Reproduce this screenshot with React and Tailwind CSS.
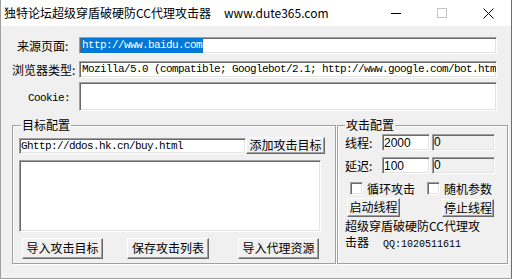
const cjk = "font-['Noto_Sans_CJK_SC','Liberation_Sans',sans-serif]";
const mono = "font-['Liberation_Mono','Noto_Sans_CJK_SC',monospace] text-[11px] tracking-[-0.6px]";
const sunken =
  "border border-t-[#a0a0a0] border-l-[#a0a0a0] border-b-white border-r-white shadow-[inset_1px_1px_0_#696969,inset_-1px_-1px_0_#e3e3e3]";
const raised =
  "border border-t-white border-l-white border-b-[#696969] border-r-[#696969] shadow-[inset_-1px_-1px_0_#a0a0a0] bg-[#f0f0f0] flex items-center justify-center leading-none pb-[1px]";
const etched = "relative border border-[#a0a0a0] shadow-[1px_1px_0_#fff,inset_1px_1px_0_#fff]";

function TitleBar() {
  return (
    <div className="h-[26px] bg-white flex items-center shrink-0">
      <span className="pl-[3px] text-[12px] leading-none whitespace-pre">
        独特论坛超级穿盾破硬防CC代理攻击器<span className="ml-[13px]">www.dute365.com</span>
      </span>
      <div className="ml-auto flex h-full">
        <div className="w-[46px] h-full flex items-center justify-center">
          <svg width="10" height="10" viewBox="0 0 10 10">
            <line x1="0" y1="5.5" x2="10" y2="5.5" stroke="#000" strokeWidth="1" />
          </svg>
        </div>
        <div className="w-[46px] h-full flex items-center justify-center">
          <svg width="10" height="10" viewBox="0 0 10 10">
            <rect x="0.5" y="0.5" width="9" height="9" fill="none" stroke="#c4c4c4" strokeWidth="1" />
          </svg>
        </div>
        <div className="w-[46px] h-full flex items-center justify-center">
          <svg width="11" height="11" viewBox="0 0 11 11">
            <path d="M0.5 0.5 L10.5 10.5 M10.5 0.5 L0.5 10.5" stroke="#000" strokeWidth="1" />
          </svg>
        </div>
      </div>
    </div>
  );
}

function Field({ label, pad, height, children, gap }) {
  return (
    <div className={`flex items-center ${gap}`} style={{ height }}>
      <div className={`w-[78px] ${pad} whitespace-pre leading-none`}>{label}</div>
      <div className={`${sunken} w-[418px] h-full bg-white flex items-center pl-[1px] overflow-hidden whitespace-pre`}>
        {children}
      </div>
    </div>
  );
}

function Checkbox({ label }) {
  return (
    <div className="flex items-center">
      <div className={`${sunken} w-[13px] h-[13px] bg-white`} />
      <span className="ml-[4px] leading-none">{label}</span>
    </div>
  );
}

export default function App() {
  return (
    <div
      className={`w-[512px] h-[279px] bg-[#f0f0f0] border-x border-b border-l-[#a0a0a0] border-r-[#6e6e6e] border-b-[#a0a0a0] flex flex-col overflow-hidden text-[12px] text-black ${cjk}`}
    >
      <TitleBar />
      <div className="flex flex-col pt-[11px]">
        <Field label="来源页面:" pad="pl-[16px]" height={17} gap="">
          <span className={`${mono} bg-[#0078d7] text-white px-[1px] leading-[15px]`}>http://www.baidu.com</span>
        </Field>
        <Field label="浏览器类型:" pad="pl-[11px]" height={17} gap="mt-[7px]">
          <span className={`${mono} pl-[1px] leading-[15px]`}>
            Mozilla/5.0 (compatible; Googlebot/2.1; http://www.google.com/bot.htm
          </span>
        </Field>
        <Field label={<span className={mono}>Cookie:</span>} pad="pl-[27px]" height={29} gap="mt-[4px]">
          {null}
        </Field>

        <div className="flex mt-[14px] pl-[11px] gap-[1px]">
          {/* 目标配置 */}
          <div className={`${etched} w-[324px] h-[139px]`}>
            <span className="absolute left-[8px] top-[-8px] bg-[#f0f0f0] px-[1px] leading-[14px]">目标配置</span>
            <div className="flex mt-[11px] pl-[6px]">
              <div className={`${sunken} w-[227px] h-[16px] mt-[1px] bg-white flex items-center pl-[1px] overflow-hidden whitespace-pre`}>
                <span className={`${mono} leading-[14px]`}>Ghttp://ddos.hk.cn/buy.html</span>
              </div>
              <div className={`${raised} w-[79px] h-[17px]`}>添加攻击目标</div>
            </div>
            <div className={`${sunken} ml-[6px] mt-[6px] w-[302px] h-[72px] bg-white`} />
            <div className="flex mt-[6px] pl-[9px]">
              <div className={`${raised} w-[81px] h-[21px]`}>导入攻击目标</div>
              <div className={`${raised} ml-[24px] w-[82px] h-[21px]`}>保存攻击列表</div>
              <div className={`${raised} ml-[29px] w-[81px] h-[21px]`}>导入代理资源</div>
            </div>
          </div>

          {/* 攻击配置 */}
          <div className={`${etched} w-[171px] h-[139px]`}>
            <span className="absolute left-[7px] top-[-8px] bg-[#f0f0f0] px-[1px] leading-[14px]">攻击配置</span>
            <div className="flex items-center mt-[8px] pl-[7px] h-[17px]">
              <div className="w-[37px] leading-none">线程:</div>
              <div className={`${sunken} w-[48px] h-full bg-white flex items-center pl-[1px] font-['Liberation_Sans',sans-serif] leading-none`}>2000</div>
              <div className={`${sunken} ml-[2px] w-[63px] h-full bg-[#f0f0f0] pl-[1px] pt-[1px] font-['Liberation_Sans',sans-serif] leading-[12px]`}>0</div>
            </div>
            <div className="flex items-center mt-[6px] pl-[7px] h-[17px]">
              <div className="w-[37px] leading-none">延迟:</div>
              <div className={`${sunken} w-[48px] h-full bg-white flex items-center pl-[1px] font-['Liberation_Sans',sans-serif] leading-none`}>100</div>
              <div className={`${sunken} ml-[2px] w-[63px] h-full bg-[#f0f0f0] pl-[1px] pt-[1px] font-['Liberation_Sans',sans-serif] leading-[12px]`}>0</div>
            </div>
            <div className="flex mt-[8px] pl-[12px] h-[13px]">
              <div className="w-[77px]">
                <Checkbox label="循环攻击" />
              </div>
              <Checkbox label="随机参数" />
            </div>
            <div className="flex mt-[3px] pl-[9px]">
              <div className={`${raised} w-[53px] h-[19px]`}>启动线程</div>
              <div className={`${raised} ml-[42px] mt-[1px] w-[52px] h-[18px]`}>停止线程</div>
            </div>
            <div className="pl-[7px] leading-[17px] whitespace-pre">
              <div>超级穿盾破硬防CC代理攻</div>
              <div className="-mt-[1px]">
                击器<span className="ml-[14px] font-['Liberation_Mono',monospace] text-[10px]">QQ:1020511611</span>
              </div>
            </div>
          </div>
        </div>
      </div>
    </div>
  );
}
